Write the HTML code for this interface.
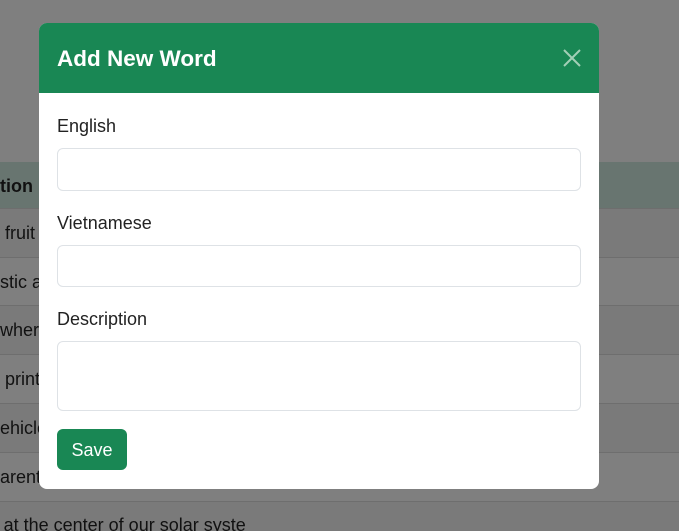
<!DOCTYPE html>
<html><head><style>
html,body{margin:0;width:679px;height:531px;overflow:hidden}
body{background:#7f7f7f;font-family:"Liberation Sans",sans-serif;position:relative}
.row{position:absolute;left:0;width:679px;border-bottom:1px solid #6e6e6e;font-size:18px;color:#111;box-sizing:border-box;white-space:nowrap}
.modal{position:absolute;left:39px;top:23px;width:560px;height:466px;background:#fff;border-radius:8px;overflow:hidden}
.hd{height:70px;background:#198754;color:#fff;font-size:22.5px;font-weight:bold;line-height:72px;padding-left:18px;position:relative}
label{position:absolute;left:18px;font-size:18px;color:#222}
.in{position:absolute;left:18px;width:524px;border:1px solid #dee2e6;border-radius:6px;box-sizing:border-box;background:#fff}
.btn{position:absolute;left:18px;top:406px;width:70px;height:41px;background:#198754;color:#fff;border-radius:6px;font-size:18px;line-height:43px;text-align:center}
</style></head><body>
<div class="row" style="top:162px;height:47px;background:#687570;font-weight:bold;line-height:49px">tion</div>
<div class="row" style="top:209px;height:49px;background:#7a7a7a;line-height:49px">&nbsp;fruit</div>
<div class="row" style="top:258px;height:48px;line-height:48px">stic a</div>
<div class="row" style="top:306px;height:49px;background:#7a7a7a;line-height:49px">where</div>
<div class="row" style="top:355px;height:49px;line-height:49px">&nbsp;printe</div>
<div class="row" style="top:404px;height:49px;background:#7a7a7a;line-height:49px">ehicle</div>
<div class="row" style="top:453px;height:49px;line-height:49px">arent</div>
<div class="row" style="top:502px;height:29px;background:#7a7a7a;line-height:46px;border:0">&thinsp;at the center of our solar syste</div>
<div class="modal">
<div class="hd">Add New Word
<svg style="position:absolute;left:524px;top:26px" width="18" height="18"><path d="M1 1L17 17M17 1L1 17" stroke="#a3cfb6" stroke-width="2"/></svg></div>
<label style="top:93px">English</label>
<div class="in" style="top:125px;height:43px"></div>
<label style="top:190px">Vietnamese</label>
<div class="in" style="top:222px;height:42px"></div>
<label style="top:286px">Description</label>
<div class="in" style="top:318px;height:70px"></div>
<div class="btn">Save</div>
</div>
</body></html>
